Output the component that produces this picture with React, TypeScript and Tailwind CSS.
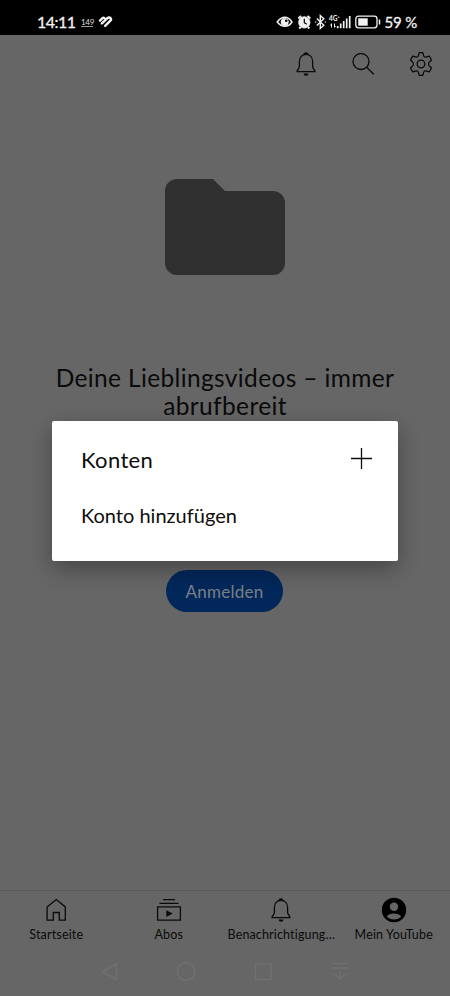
import type { ReactNode } from 'react';

function BellIcon() {
  return (
    <svg width="24" height="26" viewBox="0 0 24 26" fill="none" stroke="currentColor" strokeWidth="1.3">
      <path d="M5.400 15.500V10.500C5.400 6.300 8 3.300 12 3.300s6.600 3 6.600 7.200v5c0 2.300 2.300 3 2.300 4.700v.5H3.100v-.5c0-1.700 2.300-2.400 2.300-4.700Z" />
      <path d="M9.500 3.900a2.500 2.700 0 0 1 5 0ZM9.600 22.500h4.800a2.400 2.300 0 0 1-4.800 0Z" fill="currentColor" stroke="none" />
    </svg>
  );
}

function SearchIcon() {
  return (
    <svg width="24" height="24" viewBox="0 0 24 24" fill="none" stroke="currentColor" strokeWidth="1.3">
      <circle cx="10" cy="9.500" r="8" />
      <path d="m15.700 15.200 7 7" />
    </svg>
  );
}

function GearIcon() {
  return (
    <svg width="26" height="26" viewBox="0 0 26 26" fill="none" stroke="currentColor" strokeWidth="1.3" strokeLinejoin="round">
      <circle cx="13" cy="13" r="3.800" />
      <path d="M11.200 1.700h3.600l.9 3.200c.2.700 1.400 1.400 2.200 1.200l3.400-.9 2.200 3.800-2.400 2.400c-.6.700-.6 2.500 0 3.200l2.400 2.400-2.200 3.800-3.400-.9c-.8-.2-2 .5-2.200 1.200l-.9 3.200h-3.600l-.9-3.200c-.2-.7-1.400-1.400-2.200-1.200l-3.400.9L2.500 17l2.400-2.400c.6-.7.6-2.500 0-3.200L2.500 9l2.200-3.800 3.400.9c.8.200 2-.5 2.200-1.200Z" />
    </svg>
  );
}

function HomeIcon() {
  return (
    <svg width="24" height="26" viewBox="0 0 24 26" fill="none" stroke="currentColor" strokeWidth="1.3">
      <path d="M3.100 9.900 12.300 2.600l9 7.300v13.300h-6v-7.700H9.300v7.700H3.100Z" />
    </svg>
  );
}

function SubscriptionsIcon() {
  return (
    <svg width="26" height="26" viewBox="0 0 26 26" fill="none" stroke="currentColor" strokeWidth="1.3">
      <path d="M7 2.600h12M3.500 6.400h19M1.600 9.900h22.800v13.300H1.600Z" />
      <path d="m10.300 13.200 6.400 3.400-6.400 3.400Z" fill="currentColor" stroke="none" />
    </svg>
  );
}

function AccountIcon() {
  return (
    <svg width="26" height="26" viewBox="0 0 26 26">
      <circle cx="13" cy="13" r="12.200" fill="#000" />
      <circle cx="13" cy="9.800" r="4.200" fill="#666" />
      <path d="M5.800 19.500c1.500-2.200 4.300-3 7.200-3s5.700.8 7.200 3c-1.800 2-4.300 2.900-7.200 2.900s-5.400-.9-7.200-2.900Z" fill="#666" />
    </svg>
  );
}

function StatusBar() {
  return (
    <div className="flex h-[35px] items-center bg-black pt-[9px] pl-[37px] text-[#f2f2f2]">
      <span className="w-[44px] text-[16px] leading-none tracking-[-0.5px] [-webkit-text-stroke:0.3px]">14:11</span>
      <span className="w-[12px] border-b border-[#999] text-[8px] leading-[8px] tracking-[-0.3px] text-[#ddd]">149</span>
      <svg className="ml-[5px]" width="15" height="14" viewBox="0 0 15 14" fill="none" stroke="currentColor" strokeWidth="2.4" strokeLinecap="round" strokeLinejoin="round">
        <path d="m2 5.600 2.500-2.500c.6-.5 1.300-.5 1.900 0M3.900 8.400l5.500-5.300c1-.9 2.500-.8 3.200.1.700.9.500 1.800-.2 2.500L7.200 10.900" />
      </svg>
      <div className="ml-auto flex items-center pr-[33px]">
        <svg width="108" height="18" viewBox="0 0 108 18" fill="none" stroke="currentColor">
          <path d="M1.200 9C6 2.800 11.700 2.800 16 9c-3.800 5.700-10 5.700-14.800 0Z" strokeWidth="1.500" />
          <circle cx="8.700" cy="9" r="3.600" fill="currentColor" />
          <circle cx="10.200" cy="7.700" r="1.300" fill="#000" stroke="none" />
          <circle cx="28.300" cy="9.400" r="5.600" fill="currentColor" />
          <path d="m22.300 5.400 2.800-2.500M31.500 2.900l2.800 2.500M24.700 14l-1.500 1.500M31.900 14l1.500 1.500" strokeWidth="2" />
          <path d="M28.300 5.700v4l2.500 1.600" stroke="#000" strokeWidth="1.200" />
          <path d="m40.800 5.600 7 6.700-3.500 3.200V2.500l3.500 3.200-7 6.700M39.200 9h1M48.700 9h1" strokeWidth="1.400" />
          <path d="M55.500 10.500v4M54.300 12h1.200M58.500 10.500v4M58.500 13.500h1.200" strokeWidth="1" />
          <path d="M61.700 13v2.200M64.700 10.500v4.700M67.700 8v7.200M70.700 5.500v9.700M73.700 3v12.200" strokeWidth="1.700" />
          <rect x="79.800" y="3.200" width="21.200" height="11.600" rx="2.700" strokeWidth="1.300" />
          <rect x="82.200" y="5.300" width="9.500" height="7.400" fill="currentColor" stroke="none" />
          <path d="M103.500 6.500v5" strokeWidth="1.500" />
          <text x="53" y="8" fontSize="6.500" fontWeight="700" fill="currentColor" stroke="none">4G⁺</text>
        </svg>
        <span className="ml-px text-[15px] leading-none tracking-[-0.2px] whitespace-nowrap [-webkit-text-stroke:0.3px]">59 %</span>
      </div>
    </div>
  );
}

function NavItem({ icon, label }: { icon: ReactNode; label: string }) {
  return (
    <div className="flex w-1/4 flex-col items-center pt-[6px]">
      <div className="flex h-[26px] items-center">{icon}</div>
      <span className="mt-[3px] text-[12.5px] leading-[18px] tracking-[0.15px] whitespace-nowrap">{label}</span>
    </div>
  );
}

function AccountsDialog() {
  return (
    <div className="absolute top-[421px] left-[52px] h-[140px] w-[346px] rounded-[2px] bg-white pl-[29px] text-[#0d0d0d] shadow-[0_8px_22px_rgba(0,0,0,0.32)]">
      <div className="flex items-center justify-between pt-[24px] pr-[26px]">
        <h2 className="text-[22px] leading-[30px] tracking-[0.35px]">Konten</h2>
        <svg className="-mt-[3px]" width="21" height="21" viewBox="0 0 21 21" fill="none" stroke="currentColor" strokeWidth="1.3">
          <path d="M10.500 0v21M0 10.500h21" />
        </svg>
      </div>
      <p className="mt-[26px] text-[20px] leading-[28px]">Konto hinzufügen</p>
    </div>
  );
}

export default function App() {
  return (
    <div className="relative flex h-[996px] w-[450px] flex-col overflow-hidden bg-[#666] font-['Lato',sans-serif] text-[#0a0a0a] [font-variant-ligatures:none]">
      <StatusBar />

      <header className="flex h-[58px] items-center justify-end pr-[16px]">
        <BellIcon />
        <div className="ml-[33px]">
          <SearchIcon />
        </div>
        <div className="ml-[33px]">
          <GearIcon />
        </div>
      </header>

      <main className="flex flex-1 flex-col items-center pt-[86px]">
        <svg width="120" height="96" viewBox="0 0 120 96" fill="#303030">
          <path d="M12 0h36l12 12h48a12 12 0 0 1 12 12v60a12 12 0 0 1-12 12H12A12 12 0 0 1 0 84V12A12 12 0 0 1 12 0Z" />
        </svg>
        <h1 className="mt-[89px] text-center text-[24.5px] leading-[28px] tracking-[0.36px] whitespace-nowrap">
          Deine Lieblingsvideos – immer
          <br />
          abrufbereit
        </h1>
        <button className="mt-[150px] mr-px h-[42px] w-[117px] rounded-full bg-[#02275a] pt-[2px] text-[17px] tracking-[0.25px] text-[#7c8086]">
          Anmelden
        </button>
      </main>

      <nav className="flex h-[56px] border-t border-[#5a5a5a]">
        <NavItem icon={<HomeIcon />} label="Startseite" />
        <NavItem icon={<SubscriptionsIcon />} label="Abos" />
        <NavItem icon={<BellIcon />} label="Benachrichtigung…" />
        <NavItem icon={<AccountIcon />} label="Mein YouTube" />
      </nav>

      <div className="flex h-[50px] justify-center pt-[15px]">
        <svg width="250" height="20" viewBox="0 0 250 20" fill="none" stroke="#707070" strokeWidth="1.5">
          <path d="M16.500 2.500v16L2.500 10.500ZM155.500 3h15.500v15.500h-15.500Z" />
          <circle cx="86" cy="10.500" r="8.800" />
          <path d="M232 2.500h16M232 7h16M240 10.500v8M235 13l5 5 5-5" />
        </svg>
      </div>

      <AccountsDialog />
    </div>
  );
}
